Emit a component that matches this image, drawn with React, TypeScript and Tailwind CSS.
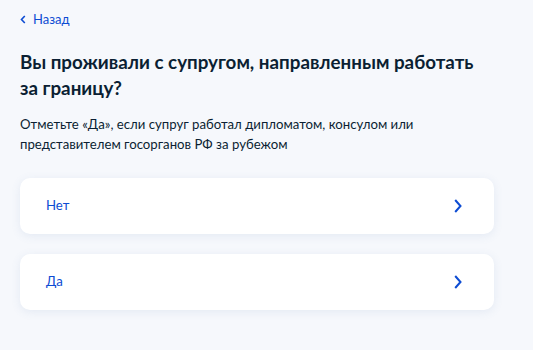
export default function App() {
  const options = ['Нет', 'Да']

  return (
    <div className="min-h-screen w-[533px] h-[350px] bg-[#f6f8fc] font-['Lato',sans-serif] text-[#0b1f33] px-5 pt-[11px]">
      {/* Back link */}
      <button className="flex items-center gap-[7px] text-[13px] leading-4 text-[#0d4cd3]">
        <svg width="6" height="9" viewBox="0 0 6 9" fill="none" className="mt-[1px]">
          <path d="M4.8 1L1.5 4.5L4.8 8" stroke="#0d4cd3" strokeWidth="1.6" />
        </svg>
        Назад
      </button>

      {/* Question */}
      <h1 className="mt-[22px] text-[18.8px] leading-[26px] font-bold">
        Вы проживали с супругом, направленным работать
        <br />
        за границу?
      </h1>
      <p className="mt-[14px] text-[13.2px] leading-[19.5px]">
        Отметьте «Да», если супруг работал дипломатом, консулом или
        <br />
        представителем госорганов РФ за рубежом
      </p>

      {/* Answers */}
      <div className="mt-[24px] w-[474px] flex flex-col gap-5">
        {options.map((opt) => (
          <div
            key={opt}
            className="h-[56px] bg-white rounded-[10px] shadow-[0_2px_10px_rgba(102,129,181,0.12)] flex items-center justify-between pl-[26px] pr-[32px]"
          >
            <span className="text-[13.2px] text-[#0d4cd3]">{opt}</span>
            <svg width="8" height="14" viewBox="0 0 8 14" fill="none">
              <path d="M1.2 1L6.5 7L1.2 13" stroke="#0d4cd3" strokeWidth="2" />
            </svg>
          </div>
        ))}
      </div>
    </div>
  )
}
